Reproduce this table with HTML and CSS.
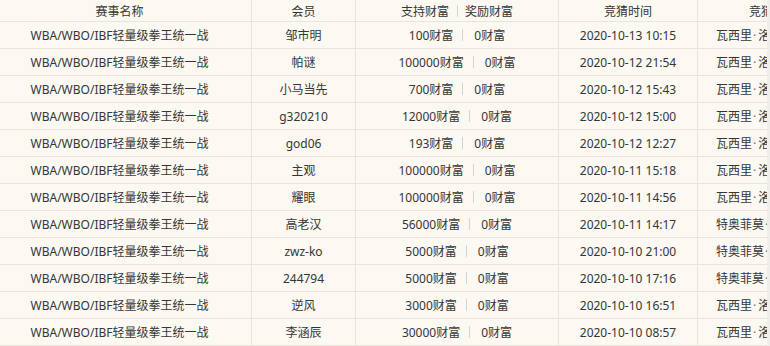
FILE: index.html
```html
<!DOCTYPE html>
<html lang="zh-CN">
<head>
<meta charset="utf-8">
<title>竞猜记录</title>
<link rel="stylesheet" href="styles.css">
</head>
<body>
<div class="wrap">
  <div class="grid">
    <div class="cell head c1">赛事名称</div>
    <div class="cell head">会员</div>
    <div class="cell head">支持财富<span class="sep sep-h"></span>奖励财富</div>
    <div class="cell head">竞猜时间</div>
    <div class="cell head c5h">竞猜选项</div>

    <div class="cell c1">WBA/WBO/IBF轻量级拳王统一战</div><div class="cell">邹市明</div><div class="cell">100财富<span class="sep"></span>0财富</div><div class="cell">2020-10-13 10:15</div><div class="cell c5">瓦西里<span class="dot">·</span>洛马琴科胜</div>
    <div class="cell c1">WBA/WBO/IBF轻量级拳王统一战</div><div class="cell">帕谜</div><div class="cell">100000财富<span class="sep"></span>0财富</div><div class="cell">2020-10-12 21:54</div><div class="cell c5">瓦西里<span class="dot">·</span>洛马琴科胜</div>
    <div class="cell c1">WBA/WBO/IBF轻量级拳王统一战</div><div class="cell">小马当先</div><div class="cell">700财富<span class="sep"></span>0财富</div><div class="cell">2020-10-12 15:43</div><div class="cell c5">瓦西里<span class="dot">·</span>洛马琴科胜</div>
    <div class="cell c1">WBA/WBO/IBF轻量级拳王统一战</div><div class="cell">g320210</div><div class="cell">12000财富<span class="sep"></span>0财富</div><div class="cell">2020-10-12 15:00</div><div class="cell c5">瓦西里<span class="dot">·</span>洛马琴科胜</div>
    <div class="cell c1">WBA/WBO/IBF轻量级拳王统一战</div><div class="cell">god06</div><div class="cell">193财富<span class="sep"></span>0财富</div><div class="cell">2020-10-12 12:27</div><div class="cell c5">瓦西里<span class="dot">·</span>洛马琴科胜</div>
    <div class="cell c1">WBA/WBO/IBF轻量级拳王统一战</div><div class="cell">主观</div><div class="cell">100000财富<span class="sep"></span>0财富</div><div class="cell">2020-10-11 15:18</div><div class="cell c5">瓦西里<span class="dot">·</span>洛马琴科胜</div>
    <div class="cell c1">WBA/WBO/IBF轻量级拳王统一战</div><div class="cell">耀眼</div><div class="cell">100000财富<span class="sep"></span>0财富</div><div class="cell">2020-10-11 14:56</div><div class="cell c5">瓦西里<span class="dot">·</span>洛马琴科胜</div>
    <div class="cell c1">WBA/WBO/IBF轻量级拳王统一战</div><div class="cell">高老汉</div><div class="cell">56000财富<span class="sep"></span>0财富</div><div class="cell">2020-10-11 14:17</div><div class="cell c5">特奥菲莫<span class="dot">·</span>洛佩斯胜</div>
    <div class="cell c1">WBA/WBO/IBF轻量级拳王统一战</div><div class="cell">zwz-ko</div><div class="cell">5000财富<span class="sep"></span>0财富</div><div class="cell">2020-10-10 21:00</div><div class="cell c5">特奥菲莫<span class="dot">·</span>洛佩斯胜</div>
    <div class="cell c1">WBA/WBO/IBF轻量级拳王统一战</div><div class="cell">244794</div><div class="cell">5000财富<span class="sep"></span>0财富</div><div class="cell">2020-10-10 17:16</div><div class="cell c5">特奥菲莫<span class="dot">·</span>洛佩斯胜</div>
    <div class="cell c1">WBA/WBO/IBF轻量级拳王统一战</div><div class="cell">逆风</div><div class="cell">3000财富<span class="sep"></span>0财富</div><div class="cell">2020-10-10 16:51</div><div class="cell c5">瓦西里<span class="dot">·</span>洛马琴科胜</div>
    <div class="cell c1">WBA/WBO/IBF轻量级拳王统一战</div><div class="cell">李涵辰</div><div class="cell">30000财富<span class="sep"></span>0财富</div><div class="cell">2020-10-10 08:57</div><div class="cell c5">瓦西里<span class="dot">·</span>洛马琴科胜</div>
  </div>
  <div class="edge"></div>
</div>
</body>
</html>
```

FILE: styles.css
```css
html, body {
  margin: 0;
  padding: 0;
  background: #fbf9f2;
}
body {
  width: 770px;
  height: 346px;
  overflow: hidden;
  font-family: "Noto Sans", "Noto Sans CJK SC", sans-serif;
  font-size: 12px;
  color: #363636;
}
.wrap {
  position: relative;
  width: 770px;
  height: 346px;
  overflow: hidden;
}
.grid {
  display: grid;
  grid-template-columns: 252px 104px 203px 139px 200px;
  grid-auto-rows: 27px;
  grid-template-rows: 22px;
  width: 898px;
}
.cell {
  box-sizing: border-box;
  border-right: 1px solid #e7e5dc;
  border-bottom: 1px solid #e7e5dc;
  display: flex;
  align-items: center;
  justify-content: center;
  white-space: nowrap;
  overflow: hidden;
}
.c1 {
  padding-right: 12px;
}
.c5, .c5h {
  justify-content: flex-start;
}
.c5 {
  padding-left: 18px;
}
.c5h {
  padding-left: 51px;
}
.dot {
  padding: 0 2px 0 1px;
  color: #5a7a8a;
}
.sep {
  display: inline-block;
  width: 1px;
  height: 12px;
  background: #c9d7dc;
  margin: 0 11px 0 9px;
}
.sep-h {
  margin: 0 7px 0 8px;
}
.edge {
  position: absolute;
  top: 0;
  right: 0;
  width: 3px;
  height: 346px;
  background: #efeee8;
}
```
